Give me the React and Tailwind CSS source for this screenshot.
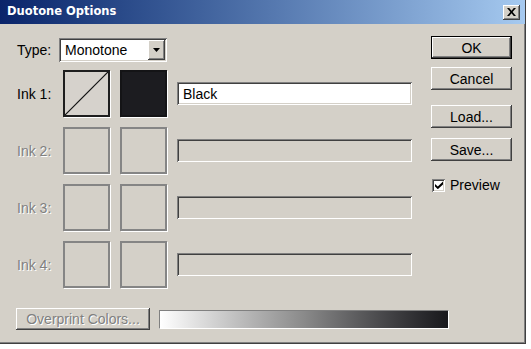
import React from "react";

const FONT = { fontFamily: '"Liberation Sans", Arial, sans-serif' };

const raised =
  "shadow-[inset_-1px_-1px_#404040,inset_1px_1px_#ffffff,inset_-2px_-2px_#808080,inset_2px_2px_#d4d0c8]";
const sunken =
  "shadow-[inset_1px_1px_#808080,inset_-1px_-1px_#ffffff,inset_2px_2px_#404040,inset_-2px_-2px_#d4d0c8]";

function Btn({ children, def, disabled, className = "" }) {
  return (
    <div
      className={`flex items-center justify-center bg-[#d4d0c8] ${
        def ? "border border-black" : ""
      } ${className}`}
    >
      <div className={`w-full h-full flex items-center justify-center ${raised}`}>
        <span
          className={
            disabled
              ? "text-[#808080] [text-shadow:1px_1px_0_#ffffff] whitespace-nowrap"
              : "text-black whitespace-nowrap"
          }
        >
          {children}
        </span>
      </div>
    </div>
  );
}

function InkRow({ n, active }) {
  return (
    <div className="flex items-center h-[47px]">
      <div
        className={`w-[46px] ${
          active ? "text-black" : "text-[#808080] [text-shadow:1px_1px_0_#ffffff]"
        }`}
      >
        Ink {n}:
      </div>
      {active ? (
        <>
          <div className="w-[47px] h-[47px] border-2 border-[#1e1e1e] bg-[#d6d2cc] shadow-[1px_1px_0_#ffffff]">
            <svg width="43" height="43" viewBox="0 0 43 43" className="block">
              <line x1="0" y1="43" x2="43" y2="0" stroke="#111" strokeWidth="1.2" />
            </svg>
          </div>
          <div className="ml-[10px] w-[47px] h-[47px] border-2 border-[#141416] bg-[#1c1c20] shadow-[1px_1px_0_#ffffff]" />
          <div
            className={`ml-[10px] w-[235px] h-[23px] bg-white flex items-center pl-[6px] ${sunken}`}
          >
            Black
          </div>
        </>
      ) : (
        <>
          <div className="w-[47px] h-[47px] border-2 border-[#858585] shadow-[1px_1px_0_#ffffff]" />
          <div className="ml-[10px] w-[47px] h-[47px] border-2 border-[#858585] shadow-[1px_1px_0_#ffffff]" />
          <div className={`ml-[10px] w-[235px] h-[23px] bg-[#d4d0c8] ${sunken}`} />
        </>
      )}
    </div>
  );
}

export default function App() {
  return (
    <div className="w-[531px] h-[349px] bg-white text-[14px] leading-none" style={FONT}>
      <div className="w-[526px] h-[344px] bg-[#d4d0c8] flex flex-col border-r border-b border-[#404040] shadow-[inset_-1px_-1px_#808080]">
        {/* Title bar */}
        <div className="h-[24px] shrink-0 bg-linear-to-r from-[#0a246a] to-[#a6caf0] flex items-center pl-[7px] pr-[5px]">
          <span
            className="text-white font-bold text-[11.5px] flex-1"
            style={{ fontFamily: '"DejaVu Sans", Verdana, sans-serif' }}
          >
            Duotone Options
          </span>
          <div className={`w-[17px] h-[15px] bg-[#d4d0c8] flex items-center justify-center ${raised}`}>
            <svg width="9" height="8" viewBox="0 0 9 8">
              <path d="M0 0h2.2l2.3 2.7L6.8 0H9L5.6 4 9 8H6.8L4.5 5.3 2.2 8H0l3.4-4z" fill="#000" />
            </svg>
          </div>
        </div>

        {/* Body */}
        <div className="flex flex-1">
          <div className="flex flex-col pl-[17px] w-[412px] shrink-0">
            <div className="flex items-center h-[24px] mt-[14px]">
              <div className="w-[42px]">Type:</div>
              <div className={`w-[108px] h-[24px] bg-white flex items-center p-[2px] ${sunken}`}>
                <span className="flex-1 pl-[4px]">Monotone</span>
                <div className={`w-[17px] h-[20px] bg-[#d4d0c8] flex items-center justify-center ${raised}`}>
                  <svg width="7" height="4" viewBox="0 0 7 4">
                    <path d="M0 0h7L3.5 4z" fill="#000" />
                  </svg>
                </div>
              </div>
            </div>
            <div className="flex flex-col gap-[10px] mt-[8px]">
              <InkRow n={1} active />
              <InkRow n={2} />
              <InkRow n={3} />
              <InkRow n={4} />
            </div>
            <div className="flex items-center mt-[20px] -ml-[1px]">
              <Btn disabled className="w-[134px] h-[22px] shrink-0">
                Overprint Colors...
              </Btn>
              <div className="ml-[9px] w-[290px] h-[19px] shrink-0 border-t border-l border-[#808080] border-b border-r border-b-white border-r-white">
                <div className="w-full h-full bg-linear-to-r from-white via-[#8a8a8a] to-[#18181c]" />
              </div>
            </div>
          </div>

          <div className="flex flex-col ml-[19px] pt-[12px] w-[81px] shrink-0">
            <Btn def className="h-[23px]">OK</Btn>
            <Btn className="h-[23px] mt-[8px]">Cancel</Btn>
            <Btn className="h-[23px] mt-[15px]">Load...</Btn>
            <Btn className="h-[23px] mt-[10px]">Save...</Btn>
            <div className="flex items-center mt-[17px] ml-[1px]">
              <div className={`w-[13px] h-[13px] bg-white flex items-center justify-center ${sunken}`}>
                <svg width="8" height="8" viewBox="0 0 8 8">
                  <path d="M0 3l2.8 2.6L8 0.6V3.4L2.8 8.2L0 5.6z" fill="#000" />
                </svg>
              </div>
              <span className="ml-[5px]">Preview</span>
            </div>
          </div>
        </div>
      </div>
    </div>
  );
}
